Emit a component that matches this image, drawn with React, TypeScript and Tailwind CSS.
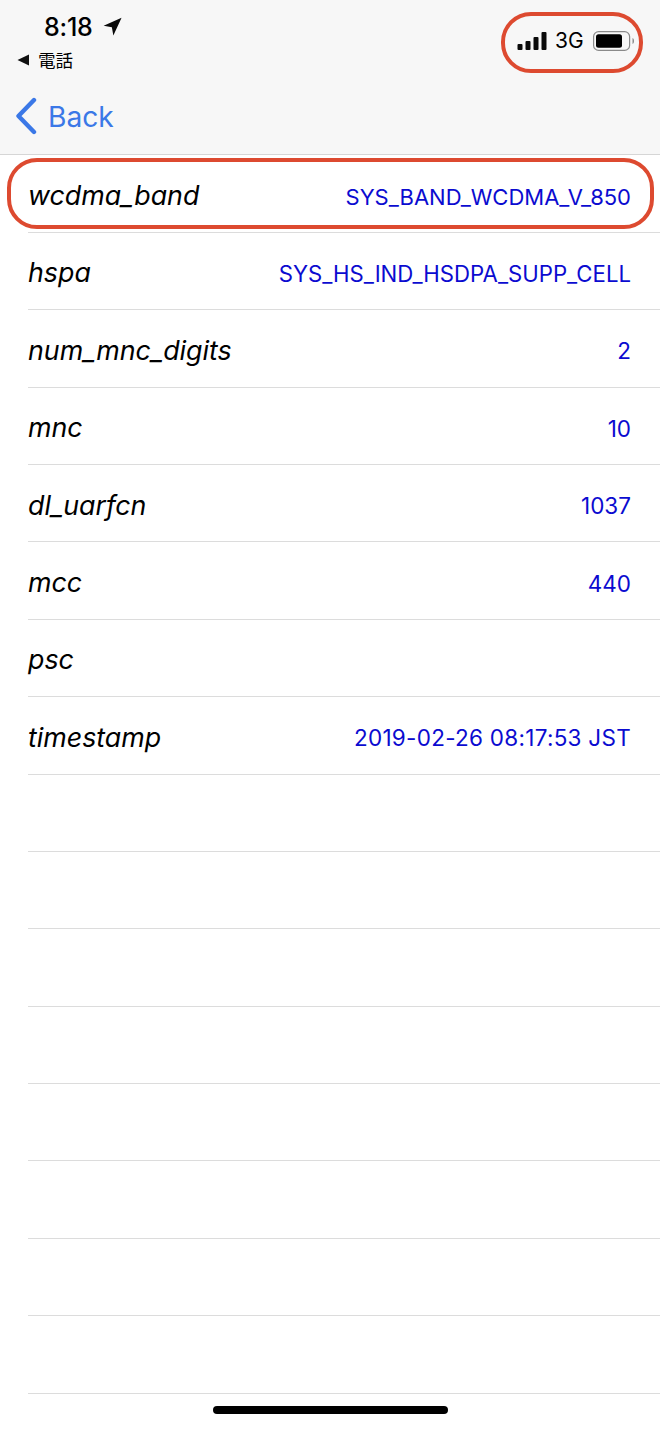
import React from 'react';

const rows: [string, string, string][] = [
  ['wcdma_band', 'SYS_BAND_WCDMA_V_850', 'text-[22px]'],
  ['hspa', 'SYS_HS_IND_HSDPA_SUPP_CELL', 'text-[22.2px]'],
  ['num_mnc_digits', '2', 'text-[22.5px]'],
  ['mnc', '10', 'text-[22.5px]'],
  ['dl_uarfcn', '1037', 'text-[22.5px]'],
  ['mcc', '440', 'text-[22.5px]'],
  ['psc', '', 'text-[22.5px]'],
  ['timestamp', '2019-02-26 08:17:53 JST', 'text-[22.5px] tracking-[0.27px]'],
  ['', '', ''],
  ['', '', ''],
  ['', '', ''],
  ['', '', ''],
  ['', '', ''],
  ['', '', ''],
  ['', '', ''],
  ['', '', ''],
];

const font = { fontFamily: 'Inter, "Noto Sans CJK JP", sans-serif' };

function StatusBar() {
  return (
    <div className="flex justify-between h-[78px]">
      <div className="flex flex-col pl-[17px]">
        <div className="flex items-center pl-[27px] pt-[13px] h-[41px]">
          <span className="text-[25px] leading-[30px] font-medium text-black tracking-[-0.2px]">8:18</span>
          <svg width="19" height="19" viewBox="0 0 18 18" className="ml-[10px] mt-[-2px]">
            <path d="M17.6 0.6 L0.6 8.4 L8.4 9.6 L9.8 17.6 Z" fill="#0a0a0a" />
          </svg>
        </div>
        <div className="flex items-center h-[20px] mt-[9px]">
          <svg width="13" height="12" viewBox="0 0 13 12">
            <path d="M0.5 6 L12 0.5 L12 11.5 Z" fill="#111" />
          </svg>
          <span className="ml-[8px] text-[17.5px] leading-[20px] text-black" style={{ fontFamily: '"Noto Sans CJK JP", sans-serif' }}>電話</span>
        </div>
      </div>
      <div className="mt-[12px] mr-[17px] w-[142px] h-[61px] rounded-[30px] border-[4px] border-[#dd4a30] flex items-center pl-[12px]">
        <svg width="30" height="18" viewBox="0 0 30 18" className="mt-[-4px]">
          <rect x="0.5" y="12" width="5" height="6" rx="1" fill="#0a0a0a" />
          <rect x="8.5" y="9" width="5" height="9" rx="1" fill="#0a0a0a" />
          <rect x="16.5" y="5" width="5" height="13" rx="1" fill="#0a0a0a" />
          <rect x="24.5" y="0" width="5" height="18" rx="1" fill="#0a0a0a" />
        </svg>
        <span className="ml-[8px] text-[21px] leading-[24px] text-black mt-[-4px]">3G</span>
        <svg width="42" height="20" viewBox="0 0 42 20" className="ml-[9px] mt-[-4px]">
          <rect x="0.6" y="0.6" width="36" height="18.8" rx="5" fill="none" stroke="#8a8a8a" strokeWidth="1.2" />
          <rect x="3" y="3.2" width="26" height="13.6" rx="2.5" fill="#000" />
          <path d="M39.5 7 C41.5 7.5 41.5 12.5 39.5 13 Z" fill="#8a8a8a" />
        </svg>
      </div>
    </div>
  );
}

function NavBar() {
  return (
    <div className="flex items-center h-[77px] pl-[15px]">
      <svg width="22" height="38" viewBox="0 0 22 38" className="mt-[-2px]">
        <path d="M19 3 L3.5 19 L19 35" fill="none" stroke="#3b78e7" strokeWidth="4.4" strokeLinecap="round" strokeLinejoin="round" />
      </svg>
      <span className="ml-[11px] text-[28.2px] leading-[36px] text-[#3b78e7]">Back</span>
    </div>
  );
}

function Row({ name, value, size, highlighted }: { name: string; value: string; size: string; highlighted?: boolean }) {
  return (
    <div className="relative ml-[28px] h-[77.4px] border-b border-[#dcdcdc] flex items-center justify-between pr-[29px]">
      <span className="text-[26.8px] italic text-black leading-[34px] mt-[3px]">{name}</span>
      <span className={`${size} text-[#0b0bd0] leading-[28px] mt-[6px]`}>{value}</span>
      {highlighted && (
        <div className="absolute left-[-21px] right-[6px] top-[3px] h-[71px] rounded-[30px] border-[4px] border-[#dd4a30]" />
      )}
    </div>
  );
}

export default function App() {
  return (
    <div className="relative w-[660px] h-[1429px] overflow-hidden bg-white" style={font}>
      <div className="bg-[#f7f7f7] border-b border-[#d6d6d6] h-[155.4px]">
        <StatusBar />
        <NavBar />
      </div>
      <div>
        {rows.map(([name, value, size], i) => (
          <Row key={i} name={name} value={value} size={size} highlighted={i === 0} />
        ))}
      </div>
      <div className="absolute left-[213px] top-[1406px] w-[235px] h-[8px] rounded-full bg-black" />
    </div>
  );
}
